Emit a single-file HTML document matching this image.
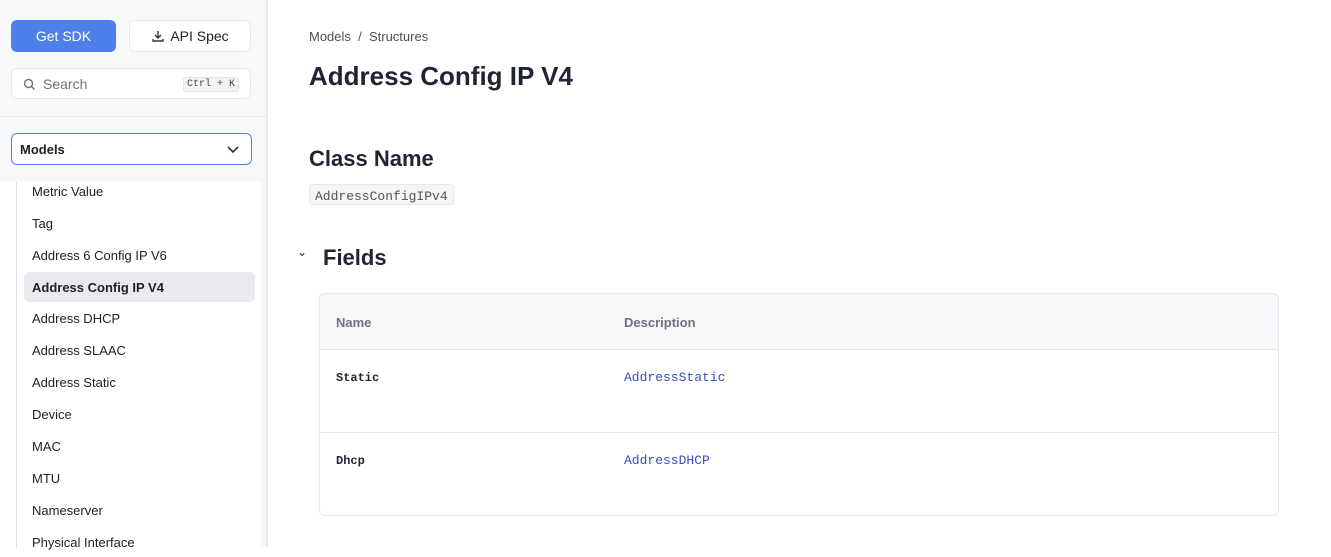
<!DOCTYPE html>
<html><head><style>
*{box-sizing:border-box;margin:0;padding:0}
body{width:1331px;height:547px;overflow:hidden;background:#fff;font-family:"Liberation Sans",sans-serif;color:#1f2433;position:relative}
.side{position:absolute;left:0;top:0;width:268px;height:547px;background:#f7f8f9;border-right:2px solid #e8eaed}
.btn{position:absolute;top:20px;height:32px;border-radius:6px;font-size:14px;display:flex;align-items:center;justify-content:center}
.sdk{left:11px;width:105px;background:#4f7fe8;color:#fff}
.api{left:129px;width:122px;background:#fff;border:1px solid #e6e8eb;color:#222}
.search{position:absolute;left:11px;top:68px;width:240px;height:31px;background:#fff;border:1px solid #e6e8eb;border-radius:6px;font-size:14px;color:#6b7280}
.kbd{position:absolute;right:11px;top:8px;font-family:"Liberation Mono",monospace;font-size:10px;background:#f2f3f5;border:1px solid #e3e5e8;border-radius:3px;padding:1px 3px;color:#444}
.hr{position:absolute;left:0;top:116px;width:266px;border-top:1px solid #e6e8eb}
.sel{position:absolute;left:11px;top:133px;width:241px;height:32px;background:#fff;border:1px solid #4f7fe8;border-radius:6px;font-size:13px;font-weight:bold;padding:8px 8px;color:#222}
.list{position:absolute;left:0;top:182px;width:261px;height:365px;background:#fff}
.line{position:absolute;left:16px;top:0;bottom:0;border-left:1px solid #dcdfe3}
.it{position:absolute;left:24px;width:231px;height:30px;font-size:13px;padding:8px 8px;color:#222;border-radius:5px}
.act{background:#e9eaed;font-weight:bold}
.main{position:absolute;left:309px}
code{font-family:"Liberation Mono",monospace}
</style></head><body>
<div class="side">
<div class="btn sdk">Get SDK</div>
<div class="btn api"><svg width="14" height="14" viewBox="0 0 14 14" style="margin-right:5px" fill="none" stroke="#333" stroke-width="1.4"><path d="M7 2v7M4 6l3 3 3-3M2 10v2h10v-2"/></svg>API Spec</div>
<div class="search"><svg width="13" height="13" viewBox="0 0 13 13" style="position:absolute;left:11px;top:9px" fill="none" stroke="#6b7280" stroke-width="1.4"><circle cx="5.5" cy="5.5" r="4"/><path d="M8.5 8.5l3 3"/></svg><span style="position:absolute;left:31px;top:7px">Search</span><span class="kbd">Ctrl + K</span></div>
<div class="hr"></div>
<div class="sel">Models<svg width="14" height="10" viewBox="0 0 14 10" style="position:absolute;right:11px;top:11px" fill="none" stroke="#333" stroke-width="1.6"><path d="M2 2l5 5 5-5"/></svg></div>
<div class="list"><div class="line"></div>
<div class="it" style="top:-6px">Metric Value</div>
<div class="it" style="top:26px">Tag</div>
<div class="it" style="top:58px">Address 6 Config IP V6</div>
<div class="it act" style="top:90px">Address Config IP V4</div>
<div class="it" style="top:121px">Address DHCP</div>
<div class="it" style="top:153px">Address SLAAC</div>
<div class="it" style="top:185px">Address Static</div>
<div class="it" style="top:217px">Device</div>
<div class="it" style="top:249px">MAC</div>
<div class="it" style="top:281px">MTU</div>
<div class="it" style="top:313px">Nameserver</div>
<div class="it" style="top:345px">Physical Interface</div>
</div>
</div>
<div class="main" style="top:29px;font-size:13px;color:#4b5060">Models &nbsp;/ &nbsp;Structures</div>
<div class="main" style="top:61px;font-size:26px;font-weight:bold">Address Config IP V4</div>
<div class="main" style="top:146px;font-size:22px;font-weight:bold">Class Name</div>
<div class="main" style="top:184px;height:21px;padding:2px 5px;background:#f4f5f7;border:1px solid #e6e8eb;border-radius:3px"><code style="font-size:13px;color:#555">AddressConfigIPv4</code></div>
<div style="position:absolute;left:297px;top:245px;font-size:12px">&#8964;</div>
<div style="position:absolute;left:323px;top:245px;font-size:22px;font-weight:bold">Fields</div>
<div style="position:absolute;left:319px;top:293px;width:960px;height:223px;border:1px solid #e6e8eb;border-radius:6px;overflow:hidden">
<div style="height:56px;background:#f7f8f9;border-bottom:1px solid #e6e8eb;font-size:13px;font-weight:bold;color:#6b7280;position:relative">
<span style="position:absolute;left:16px;top:21px">Name</span><span style="position:absolute;left:304px;top:21px">Description</span></div>
<div style="height:83px;border-bottom:1px solid #e6e8eb;position:relative">
<code style="position:absolute;left:16px;top:21px;font-size:12px;font-weight:bold">Static</code><code style="position:absolute;left:304px;top:20px;font-size:13px;color:#3b4cc0">AddressStatic</code></div>
<div style="position:relative;height:83px">
<code style="position:absolute;left:16px;top:21px;font-size:12px;font-weight:bold">Dhcp</code><code style="position:absolute;left:304px;top:20px;font-size:13px;color:#3b4cc0">AddressDHCP</code></div>
</div>
</body></html>
